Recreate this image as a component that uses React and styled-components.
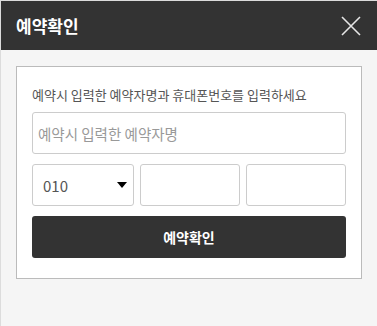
import React from 'react'
import styled, { createGlobalStyle } from 'styled-components'

const GlobalStyle = createGlobalStyle`
    body {
        margin: 0;
        font-family: "Noto Sans CJK KR", "Noto Sans", sans-serif;
    }
    * { box-sizing: border-box; }
`

function App() {
    return (
        <Frame>
            <GlobalStyle />
            <Header>
                <Title>예약확인</Title>
                <Close aria-label="닫기">
                    <svg width="20" height="20" viewBox="0 0 20 20">
                        <path d="M1 1 L19 19 M19 1 L1 19" stroke="#e6e6e6" strokeWidth="1.6" fill="none" />
                    </svg>
                </Close>
            </Header>

            <Body>
                <Card>
                    <Label>예약시 입력한 예약자명과 휴대폰번호를 입력하세요</Label>
                    <Field placeholder="예약시 입력한 예약자명" />
                    <PhoneRow>
                        <SelectBox>
                            <span>010</span>
                            <Caret />
                        </SelectBox>
                        <Field />
                        <Field />
                    </PhoneRow>
                    <Submit>예약확인</Submit>
                </Card>
            </Body>
        </Frame>
    )
}

export default App

const Frame = styled.div`
    min-height: 326px;
    background: #f5f5f5;
    border-top: 1px solid #dcdcdc;
    border-left: 1px solid #dcdcdc;
`

const Header = styled.div`
    height: 49px;
    background: #333;
    display: flex;
    align-items: center;
    justify-content: space-between;
    padding: 0 16px 0 15px;
`

const Title = styled.h1`
    margin: 0;
    font-size: 17px;
    font-weight: 700;
    color: #fff;
`

const Close = styled.button`
    border: 0;
    padding: 0;
    background: none;
    display: flex;
    cursor: pointer;
`

const Body = styled.div`
    padding: 16px 15px 15px;
`

const Card = styled.div`
    background: #fff;
    border: 1px solid #bbb;
    padding: 19px 15px 20px;
    display: flex;
    flex-direction: column;
    gap: 10px;
`

const Label = styled.p`
    margin: 0 0 -2px;
    font-size: 13px;
    line-height: 18px;
    color: #555;
`

const Field = styled.input`
    height: 42px;
    width: 100%;
    border: 1px solid #ccc;
    border-radius: 3px;
    padding: 0 5px;
    font-family: inherit;
    font-size: 14.5px;
    color: #333;
    &::placeholder { color: #999; }
`

const PhoneRow = styled.div`
    display: grid;
    grid-template-columns: 102px 1fr 1fr;
    gap: 6px;
`

const SelectBox = styled.div`
    height: 42px;
    border: 1px solid #ccc;
    border-radius: 3px;
    display: flex;
    align-items: center;
    justify-content: space-between;
    padding: 0 6px 0 10px;
    font-size: 15px;
    color: #555;
`

const Caret = styled.span`
    width: 0;
    height: 0;
    border-left: 5px solid transparent;
    border-right: 5px solid transparent;
    border-top: 6px solid #000;
`

const Submit = styled.button`
    height: 42px;
    border: 0;
    border-radius: 3px;
    background: #333;
    color: #fff;
    font-family: inherit;
    font-size: 14px;
    font-weight: 700;
    cursor: pointer;
`
